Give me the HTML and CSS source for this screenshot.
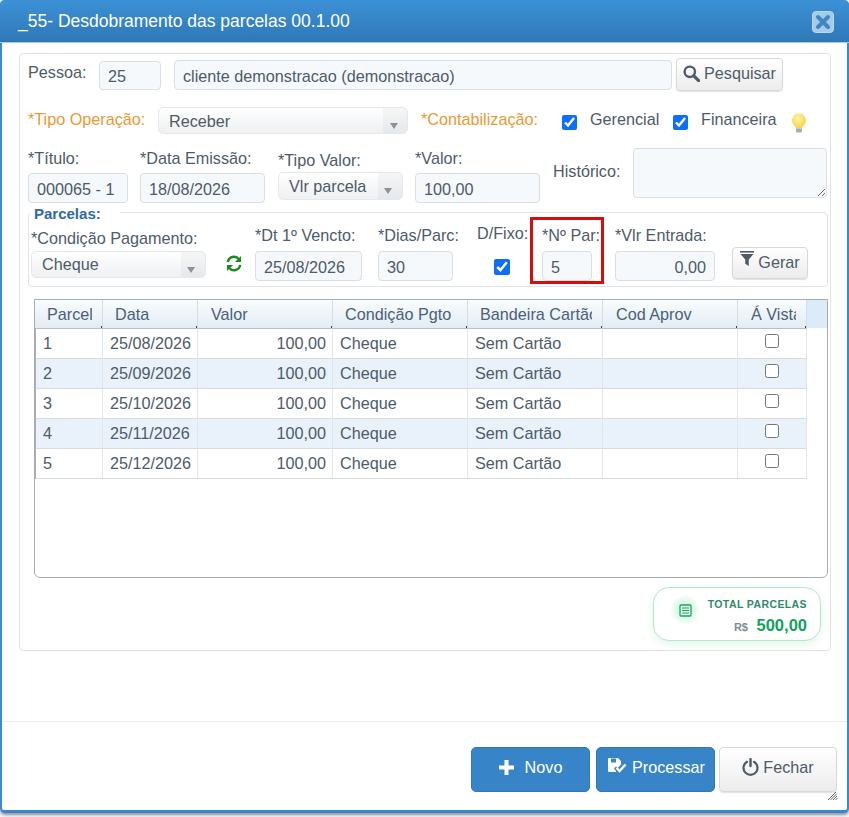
FILE: index.html
```html
<!DOCTYPE html>
<html lang="pt-BR">

<head>
  <meta charset="UTF-8">
  <title>Desdobramento das parcelas</title>
  <link rel="stylesheet" href="styles.css">
</head>

<body>
  <div class="janela">
    <div class="titulo-bar">
      <span class="titulo">_55- Desdobramento das parcelas 00.1.00</span>
      <button class="fechar-x" type="button">
        <svg width="16" height="16" viewBox="0 0 16 16"><path d="M3 3l10 10M13 3L3 13" stroke="#3f86c2" stroke-width="4" stroke-linecap="round"/></svg>
      </button>
    </div>

    <div class="conteudo">
      <div class="painel">
        <!-- pessoa -->
        <div class="linha linha-pessoa">
          <label class="rotulo rot-pessoa">Pessoa:</label>
          <input class="campo cod-pessoa" type="text" value="25">
          <input class="campo nome-pessoa" type="text" value="cliente demonstracao (demonstracao)">
          <button class="btn btn-pesquisar" type="button">
            <svg width="17" height="17" viewBox="0 0 17 17"><circle cx="6.800" cy="6.800" r="5.200" fill="none" stroke="#4d5b6a" stroke-width="2.400"/><path d="M10.800 10.800l4.800 4.800" stroke="#4d5b6a" stroke-width="3.200" stroke-linecap="round"/></svg>
            Pesquisar
          </button>
        </div>

        <!-- operacao -->
        <div class="linha linha-operacao">
          <label class="rotulo laranja rot-tipo">*Tipo Operação:</label>
          <div class="combo combo-tipo">Receber</div>
          <label class="rotulo laranja rot-contab">*Contabilização:</label>
          <input class="check check-gerencial" type="checkbox" checked>
          <label class="rotulo rot-gerencial">Gerencial</label>
          <input class="check check-financeira" type="checkbox" checked>
          <label class="rotulo rot-financeira">Financeira</label>
          <svg class="lampada" width="16" height="21" viewBox="0 0 16 21">
            <defs><radialGradient id="luz" cx="0.45" cy="0.35" r="0.7"><stop offset="0" stop-color="#fff3a8"/><stop offset="1" stop-color="#f5cf3c"/></radialGradient></defs>
            <path d="M8 0.500a7 7 0 0 1 4.400 12.400c-.8.700-1.200 1.500-1.300 2.600H4.900c-.1-1.100-.5-1.900-1.300-2.600A7 7 0 0 1 8 0.500z" fill="url(#luz)"/>
            <rect x="5" y="15.500" width="6" height="4" rx="1" fill="#a9adb0"/>
          </svg>
        </div>

        <!-- titulo -->
        <div class="linha linha-titulo">
          <div class="grupo grupo-titulo">
            <label class="rotulo">*Título:</label>
            <input class="campo" type="text" value="000065 - 1">
          </div>
          <div class="grupo grupo-emissao">
            <label class="rotulo">*Data Emissão:</label>
            <input class="campo" type="text" value="18/08/2026">
          </div>
          <div class="grupo grupo-tipovalor">
            <label class="rotulo">*Tipo Valor:</label>
            <div class="combo combo-valor">Vlr parcela</div>
          </div>
          <div class="grupo grupo-valor">
            <label class="rotulo">*Valor:</label>
            <input class="campo" type="text" value="100,00">
          </div>
          <label class="rotulo rot-historico">Histórico:</label>
          <textarea class="campo historico"></textarea>
        </div>

        <fieldset class="parcelas">
          <legend>Parcelas:</legend>
          <div class="linha-parcelas">
            <div class="grupo grupo-condicao">
              <label class="rotulo">*Condição Pagamento:</label>
              <div class="combo combo-cond">Cheque</div>
            </div>
            <svg class="recarregar" width="16" height="17" viewBox="0 0 16 17">
              <path d="M1.800 7.200A6.300 6.300 0 0 1 13 4.200" fill="none" stroke="#1c8a1c" stroke-width="2.400"/>
              <path d="M15 1v6h-6z" fill="#1c8a1c"/>
              <path d="M14.200 9.800A6.300 6.300 0 0 1 3 12.800" fill="none" stroke="#1c8a1c" stroke-width="2.400"/>
              <path d="M1 16v-6h6z" fill="#1c8a1c"/>
            </svg>
            <div class="grupo grupo-vencto">
              <label class="rotulo">*Dt 1º Vencto:</label>
              <input class="campo" type="text" value="25/08/2026">
            </div>
            <div class="grupo grupo-dias">
              <label class="rotulo">*Dias/Parc:</label>
              <input class="campo" type="text" value="30">
            </div>
            <div class="grupo grupo-fixo">
              <label class="rotulo">D/Fixo:</label>
              <input class="check check-fixo" type="checkbox" checked>
            </div>
            <div class="grupo grupo-npar">
              <label class="rotulo">*Nº Par:</label>
              <input class="campo" type="text" value="5">
            </div>
            <div class="grupo grupo-entrada">
              <label class="rotulo">*Vlr Entrada:</label>
              <input class="campo direita" type="text" value="0,00">
            </div>
            <button class="btn btn-gerar" type="button">
              <svg width="14" height="16" viewBox="0 0 14 16"><path d="M0 0h14v1.600H0z" fill="#4d5b6a"/><path d="M0.500 3h13L8.800 8.500V15L5.200 12.800V8.500z" fill="#4d5b6a"/></svg>
              Gerar
            </button>
          </div>
        </fieldset>

        <div class="grade">
          <table>
            <colgroup>
              <col class="c-parcel"><col class="c-data"><col class="c-larga"><col class="c-larga"><col class="c-larga"><col class="c-larga"><col class="c-vista">
            </colgroup>
            <thead>
              <tr>
                <th><div>Parcel</div></th>
                <th><div>Data</div></th>
                <th class="th-folga"><div>Valor</div></th>
                <th><div>Condição Pgto</div></th>
                <th><div>Bandeira Cartão</div></th>
                <th class="th-folga"><div>Cod Aprov</div></th>
                <th class="th-folga"><div>Á Vista</div></th>
              </tr>
            </thead>
            <tbody>
              <tr><td>1</td><td>25/08/2026</td><td class="num">100,00</td><td>Cheque</td><td>Sem Cartão</td><td></td><td class="meio"><input type="checkbox"></td></tr>
              <tr><td>2</td><td>25/09/2026</td><td class="num">100,00</td><td>Cheque</td><td>Sem Cartão</td><td></td><td class="meio"><input type="checkbox"></td></tr>
              <tr><td>3</td><td>25/10/2026</td><td class="num">100,00</td><td>Cheque</td><td>Sem Cartão</td><td></td><td class="meio"><input type="checkbox"></td></tr>
              <tr><td>4</td><td>25/11/2026</td><td class="num">100,00</td><td>Cheque</td><td>Sem Cartão</td><td></td><td class="meio"><input type="checkbox"></td></tr>
              <tr><td>5</td><td>25/12/2026</td><td class="num">100,00</td><td>Cheque</td><td>Sem Cartão</td><td></td><td class="meio"><input type="checkbox"></td></tr>
            </tbody>
          </table>
        </div>

        <div class="total">
          <div class="total-icone">
            <svg width="13" height="13" viewBox="0 0 13 13"><rect x="1" y="1" width="11" height="11" rx="1" fill="#e6f9ef" stroke="#18a562" stroke-width="1.300"/><path d="M3 4h7M3 6.500h7M3 9h7" stroke="#18a562" stroke-width="1.100"/></svg>
          </div>
          <div class="total-texto">
            <div class="total-rotulo">TOTAL PARCELAS</div>
            <div class="total-valor"><span class="moeda">R$</span> 500,00</div>
          </div>
        </div>
      </div>
    </div>

    <div class="rodape">
      <button class="btn btn-azul btn-novo" type="button">
        <svg width="15" height="15" viewBox="0 0 15 15"><path d="M5.500 0h4v5.500h5.500v4H9.500V15h-4V9.500H0v-4h5.500z" fill="#fff"/></svg>
        Novo
      </button>
      <button class="btn btn-azul btn-processar" type="button">
        <svg width="19" height="17" viewBox="0 0 19 17"><path d="M0 1a1 1 0 0 1 1-1h9l3 3v3.500L9.500 10 8 8.500 6 10.500 8 13v1H1a1 1 0 0 1-1-1z" fill="#fff"/><path d="M3 0.500h5v4H3z" fill="#3784c8"/><path d="M8.500 10l3 3 6-6.500" fill="none" stroke="#fff" stroke-width="2.400"/></svg>
        Processar
      </button>
      <button class="btn btn-fechar" type="button">
        <svg width="17" height="18" viewBox="0 0 17 18"><path d="M5 3.800a7 7 0 1 0 7 0" fill="none" stroke="#4d5b6a" stroke-width="2.200" stroke-linecap="round"/><path d="M8.500 1v7" stroke="#4d5b6a" stroke-width="2.400" stroke-linecap="round"/></svg>
        Fechar
      </button>
    </div>

    <svg class="puxador" width="11" height="10" viewBox="0 0 11 10"><path d="M1 9l8-8M3.500 9l6-6M6 9l4-4M8.500 9l2-2" stroke="#666" stroke-width="1"/></svg>
  </div>
</body>

</html>
```

FILE: styles.css
```css
body {
  margin: 0;
  background-color: #f4f5f6;
  font-family: "Liberation Sans", Arial, sans-serif;
  font-size: 16.2px;
  color: #4d5b6a;
  height: 817px;
  overflow: hidden;
}

.janela {
  position: relative;
  box-sizing: border-box;
  width: 849px;
  height: 813px;
  display: flex;
  flex-direction: column;
  background-color: #fff;
  border-left: 2px solid #3a8ad0;
  border-right: 2px solid #3a8ad0;
  border-bottom: 3px solid #3a86c6;
  border-radius: 5px;
  box-shadow: 0 2px 3px #8c959d;
}

.titulo-bar {
  flex: none;
  height: 43px;
  margin: 0 -2px;
  padding: 0 15px 0 18px;
  display: flex;
  align-items: center;
  justify-content: space-between;
  background: linear-gradient(#3c91d6, #2f78b6);
  border-bottom: 1px solid #a9c9e4;
  box-sizing: border-box;
  border-radius: 5px 5px 0 0;
}

.titulo {
  color: #fff;
  font-size: 17.5px;
}

.fechar-x {
  width: 22px;
  height: 22px;
  padding: 0;
  margin-top: 2px;
  display: flex;
  align-items: center;
  justify-content: center;
  background-color: #a5cbea;
  border: 1px solid #bcd8ef;
  border-radius: 4px;
}

.conteudo {
  flex: 1;
  padding: 10px 0 0 17px;
}

.painel {
  box-sizing: border-box;
  width: 812px;
  height: 598px;
  padding: 4px 0 0 8px;
  border: 1px solid #dfe3e6;
  border-radius: 4px;
}

.linha {
  display: flex;
  align-items: flex-start;
}

.linha-pessoa { height: 33px; }
.linha-operacao { height: 28px; margin-top: 16px; }
.linha-titulo { height: 55px; margin-top: 13px; }

.rotulo {
  display: block;
  height: 18px;
  line-height: 19px;
  white-space: nowrap;
}

.laranja { color: #ea9a34; }

.campo {
  box-sizing: border-box;
  display: block;
  width: 100%;
  height: 30px;
  padding: 2px 8px 0 8px;
  font-family: inherit;
  font-size: 16.2px;
  color: #4d5b6a;
  background-color: #f5f9fc;
  border: 1px solid #d9dfe4;
  border-radius: 4px;
}

.direita { text-align: right; }

.combo {
  box-sizing: border-box;
  height: 27px;
  line-height: 27px;
  padding-left: 10px;
  display: flex;
  justify-content: space-between;
  color: #4d5b6a;
  background: linear-gradient(90deg, transparent calc(100% - 24px), rgba(120, 130, 140, 0.07) calc(100% - 24px)), linear-gradient(#fff, #eef0f2);
  border: 1px solid #e6e8ea;
  border-radius: 5px;
}

.combo::after {
  content: "";
  width: 0;
  height: 0;
  margin: 15px 9px 0 0;
  border-left: 4px solid transparent;
  border-right: 4px solid transparent;
  border-top: 6px solid #8b9299;
}

.btn {
  display: flex;
  align-items: center;
  justify-content: center;
  gap: 4px;
  box-sizing: border-box;
  padding: 0 0 2px 0;
  font-family: inherit;
  font-size: 16.2px;
  color: #4d5b6a;
  background: linear-gradient(#fff, #ececec);
  border: 1px solid #d6d9dc;
  border-radius: 4px;
  box-shadow: 0 1px 1px #e2e2e2;
}

.check {
  margin: 0;
  width: 15px;
  height: 15px;
  accent-color: #0b6efd;
}

/* linha 1 */
.rot-pessoa { width: 71px; margin-top: 5px; }
.cod-pessoa { width: 62px; height: 29px; margin-top: 3px; }
.nome-pessoa { width: 498px; margin: 2px 0 0 13px; }
.btn-pesquisar { width: 107px; height: 33px; margin-left: 4px; }

/* linha 2 */
.rot-tipo { width: 130px; margin-top: 3px; }
.combo-tipo { width: 250px; }
.rot-contab { width: 141px; margin: 3px 0 0 13px; }
.check-gerencial, .check-financeira { margin-top: 8px; }
.rot-gerencial { width: 70px; margin: 3px 13px 0 13px; }
.rot-financeira { width: 76px; margin: 3px 14px 0 13px; }
.lampada { margin-top: 6px; }

/* linha 3 */
.linha-titulo .grupo .rotulo { margin-bottom: 6px; line-height: 18px; }
.grupo-titulo { width: 100px; margin-top: 1px; }
.grupo-emissao { width: 125px; margin: 1px 0 0 12px; }
.grupo-tipovalor { width: 125px; margin: 3px 0 0 13px; }
.linha-titulo .grupo-tipovalor .rotulo { margin-bottom: 3px; }
.combo-valor { height: 28px; }
.combo-valor::after { margin-right: 10px; }
.grupo-valor { width: 125px; margin: 1px 0 0 12px; }
.rot-historico { width: 80px; margin: 14px 0 0 13px; }
.historico { width: 194px; height: 50px; padding: 4px; }

/* parcelas */
.parcelas {
  box-sizing: border-box;
  width: 800px;
  height: 80px;
  margin: 4px 0 0 0;
  padding: 0;
  border: 1px solid #e0e4e7;
  border-radius: 4px;
}

.parcelas legend {
  height: 10px;
  line-height: 14px;
  margin-left: 1px;
  padding: 0 19px 0 4px;
  font-size: 15px;
  font-weight: bold;
  color: #2f6aa3;
}

.linha-parcelas {
  display: flex;
  align-items: flex-start;
}

.grupo-condicao { width: 175px; margin: 12px 0 0 2px; }
.grupo-condicao .rotulo { margin-bottom: 4px; }
.combo-cond { line-height: 25px; }
.combo-cond::after { margin-right: 10px; }
.recarregar { margin: 38px 0 0 20px; }
.grupo-vencto { width: 107px; margin: 9px 0 0 13px; }
.grupo-dias { width: 75px; margin: 9px 0 0 16px; }
.grupo-vencto .rotulo, .grupo-dias .rotulo, .grupo-entrada .rotulo { margin-bottom: 7px; }
.grupo-fixo {
  width: 53px;
  margin: 7px 0 0 24px;
  display: flex;
  flex-direction: column;
}
.check-fixo { width: 16px; height: 16px; margin: 17px 0 0 17px; }

.grupo-npar {
  box-sizing: border-box;
  width: 74px;
  height: 67px;
  padding: 6px 9px 0 9px;
  border: 3px solid #d90b0b;
}
.grupo-npar .rotulo { margin-bottom: 7px; }

.grupo-entrada { width: 100px; margin: 9px 0 0 11px; }
.btn-gerar { width: 76px; height: 32px; margin: 30px 0 0 17px; }
.btn-gerar svg { margin-bottom: 6px; }

/* grade */
.grade {
  box-sizing: border-box;
  width: 794px;
  height: 279px;
  margin: 12px 0 0 6px;
  border: 1px solid #a9adb1;
  border-radius: 0 0 6px 6px;
  background: linear-gradient(#dcebf8, #dcebf8) no-repeat 0 0 / 100% 28px;
}

table {
  table-layout: fixed;
  width: 772px;
  border-collapse: separate;
  border-spacing: 0;
}

.c-parcel { width: 68px; }
.c-data { width: 95px; }
.c-larga { width: 135px; }
.c-vista { width: 69px; }

th {
  box-sizing: border-box;
  height: 29px;
  padding: 0 10px 0 12px;
  font-weight: normal;
  text-align: left;
  color: #4b6078;
  background: linear-gradient(#3a424a, #3a424a) no-repeat right bottom / 1px 2px, linear-gradient(#f9fcfe, #e3ecf4);
  border-right: 1px solid #d5dee6;
  border-bottom: 1px solid #b4bfc9;
}

.th-folga { padding-left: 13px; }

th div {
  overflow: hidden;
  white-space: nowrap;
}

td {
  box-sizing: border-box;
  height: 30px;
  padding: 0 6px 0 7px;
  border-right: 1px solid #e3e6e8;
  border-bottom: 1px solid #d9dcdf;
  white-space: nowrap;
}

td:first-child { border-left: 1px solid #a9adb1; }
tbody tr:nth-child(even) td { background-color: #e9f1fb; }
.num { text-align: right; }

.meio {
  text-align: center;
  padding: 0 0 2px 0;
}

.meio input {
  margin: 0;
  width: 14px;
  height: 14px;
}

/* total */
.total {
  box-sizing: border-box;
  width: 168px;
  height: 54px;
  margin: 9px 0 0 625px;
  padding: 0 13px 0 16px;
  display: flex;
  justify-content: space-between;
  align-items: center;
  background-color: #fff;
  border: 1px solid #b9e6cb;
  border-radius: 16px;
  box-shadow: 0 3px 10px #e0f6e9;
}

.total-icone {
  width: 30px;
  height: 30px;
  display: flex;
  align-items: center;
  justify-content: center;
  background: radial-gradient(circle, #d3f6e1 30%, #ffffff 72%);
  border-radius: 50%;
  margin-top: -8px;
}

.total-texto {
  text-align: right;
  padding-top: 5px;
}

.total-rotulo {
  font-size: 10.5px;
  font-weight: bold;
  letter-spacing: 0.4px;
  color: #2f8a6c;
}

.total-valor {
  margin-top: 6px;
  font-size: 16.5px;
  font-weight: bold;
  color: #12a15e;
}

.moeda {
  font-size: 11px;
  color: #7f8c98;
  margin-right: 4px;
}

/* rodape */
.rodape {
  box-sizing: border-box;
  flex: none;
  height: 89px;
  padding: 25px 10px 0 0;
  display: flex;
  justify-content: flex-end;
  border-top: 1px solid #eceeef;
}

.btn-azul {
  color: #fff;
  background: #3784c8;
  border: 1px solid #3278b6;
  border-radius: 5px;
  box-shadow: none;
}

.btn-novo { width: 119px; height: 45px; gap: 11px; padding-bottom: 5px; }
.btn-processar { width: 119px; height: 45px; margin-left: 6px; padding: 0 0 5px 2px; gap: 5px; }
.btn-fechar { width: 118px; height: 45px; margin-left: 4px; padding-bottom: 5px; }
.btn-processar svg { margin-bottom: 1px; }

.puxador {
  position: absolute;
  right: 9px;
  bottom: 9px;
}
```
